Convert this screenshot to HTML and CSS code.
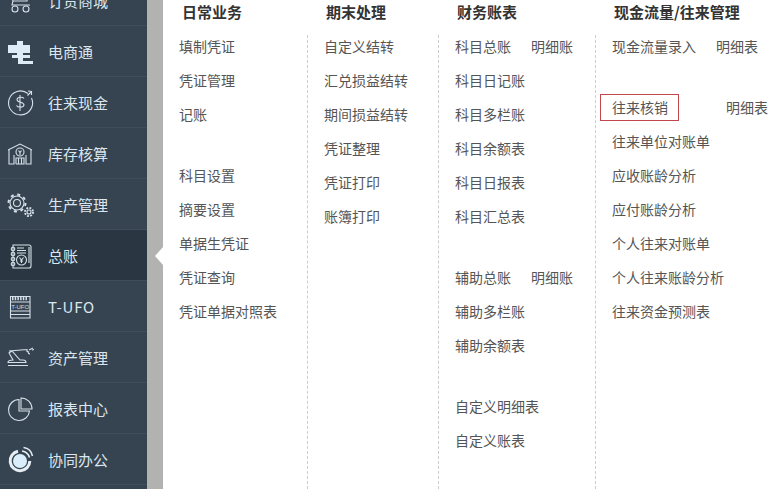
FILE: index.html
```html
<!DOCTYPE html>
<html lang="zh-CN">
<head>
  <meta charset="UTF-8" />
  <meta name="viewport" content="width=device-width, initial-scale=1.0"/>
  <title>总账</title>
  <link rel="stylesheet" href="styles.css">
</head>
<body>
  <div class="page">
    <ul class="sidebar">
      <li class="nav-item">
        <svg class="nav-icon" viewBox="0 0 40 40"><path d="M5 12h20l-2 9H9zM9 21l-1 4h18"/><circle cx="11" cy="29" r="3"/><circle cx="22" cy="29" r="3"/></svg>
        <span>订货商城</span>
      </li>
      <li class="nav-item">
        <svg class="nav-icon" viewBox="0 0 40 40"><path class="solid" d="M13 10h6v4h7v8h-7v2h7v3h-7v3h10v3H14v-6H8v-3h5v-2H4v-8h9z"/></svg>
        <span>电商通</span>
      </li>
      <li class="nav-item">
        <svg class="nav-icon" viewBox="0 0 40 40"><path d="M24 11.500A12 12 0 1 0 27.500 16"/><path d="M24 9l3.500 .5 0 3.500M27.500 9.500l-4 4"/><path d="M20 16.500c-1-1.500-6.500-2-7 1 0 3.500 7 2 7 5.500-.5 3-6.500 2.500-7.500 .5M16 13v16"/></svg>
        <span>往来现金</span>
      </li>
      <li class="nav-item">
        <svg class="nav-icon" viewBox="0 0 40 40"><path d="M4 17l12-6 12 6M5 17v14h5V22M27 17v14h-5V22"/><circle cx="16" cy="19" r="4"/><path d="M12 31v-6h8v6h-8M14.500 25v6M17.500 25v6M14.500 17.500l1.500 2 1.500-2M16 19.500V22"/></svg>
        <span>库存核算</span>
      </li>
      <li class="nav-item">
        <svg class="nav-icon" viewBox="0 0 40 40"><circle class="teeth" cx="13" cy="19" r="8.500"/><circle cx="13" cy="19" r="7"/><circle cx="13" cy="19" r="3.500"/><circle class="teeth-small" cx="25" cy="28" r="4"/><circle cx="25" cy="28" r="2"/></svg>
        <span>生产管理</span>
      </li>
      <li class="nav-item nav-item-active">
        <svg class="nav-icon" viewBox="0 0 40 40"><path d="M9 10h16a2 2 0 0 1 2 2v19a2 2 0 0 1-2 2H9zM25 12v16"/><circle cx="9" cy="14" r="1.800"/><circle cx="9" cy="19" r="1.800"/><circle cx="9" cy="24" r="1.800"/><circle cx="9" cy="29" r="1.800"/><path d="M13 13h7M13 15.500h9M13 18h9"/><circle cx="17.500" cy="25" r="5"/><path d="M15.500 22.500l2 2.500 2-2.500M17.500 25v3M16 26h3"/></svg>
        <span>总账</span>
      </li>
      <li class="nav-item">
        <svg class="nav-icon" viewBox="0 0 40 40"><path d="M6.500 10.500h19.500v21.500H6.500zM6.500 16h19.500M6.500 25h19.500M6.500 28.500h19.500"/><path class="teeth-line" d="M8 12.500h16"/><text class="tufo-label" x="16.200" y="23">T-UFO</text></svg>
        <span class="latin-label">T-UFO</span>
      </li>
      <li class="nav-item">
        <svg class="nav-icon" viewBox="0 0 40 40"><path d="M4 28.500h20M4 25.500c0-2 2-2.500 5-2.500l-4-7 3-2 8 9h3c2 0 3 1 3 2.500zM5 14l18-1.500M23 12v3M24 14c0 2 1 3 2 3M25 13l4-2M28 13l2-.5"/></svg>
        <span>资产管理</span>
      </li>
      <li class="nav-item">
        <svg class="nav-icon" viewBox="0 0 40 40"><path d="M15 11.500a10.500 10.500 0 1 0 10.500 11.500H15zM17 10v11h11a11 11 0 0 0-11-11z"/></svg>
        <span>报表中心</span>
      </li>
      <li class="nav-item">
        <svg class="nav-icon" viewBox="0 0 40 40"><circle class="sync-core" cx="16" cy="22" r="7"/><path class="sync-ring" d="M14 12.300A9.800 9.800 0 1 0 25.800 22"/><path class="sync-wave" d="M18 12c3.500.5 6.500 3 7.500 6.500M19.500 8.500c4.500 .5 8 4 9 8.500"/></svg>
        <span>协同办公</span>
      </li>
      <li class="nav-item"></li>
    </ul>
    <div class="band"></div>
    <div class="menu">
      <section>
        <h3 class="col-title">日常业务</h3>
        <ul class="col-list">
          <li class="row">填制凭证</li>
          <li class="row">凭证管理</li>
          <li class="row">记账</li>
          <li class="row row-gap">科目设置</li>
          <li class="row">摘要设置</li>
          <li class="row">单据生凭证</li>
          <li class="row">凭证查询</li>
          <li class="row">凭证单据对照表</li>
        </ul>
      </section>
      <section>
        <h3 class="col-title">期末处理</h3>
        <ul class="col-list col-line">
          <li class="row">自定义结转</li>
          <li class="row">汇兑损益结转</li>
          <li class="row">期间损益结转</li>
          <li class="row">凭证整理</li>
          <li class="row">凭证打印</li>
          <li class="row">账簿打印</li>
        </ul>
      </section>
      <section>
        <h3 class="col-title">财务账表</h3>
        <ul class="col-list col-line">
          <li class="row">科目总账<a class="detail">明细账</a></li>
          <li class="row">科目日记账</li>
          <li class="row">科目多栏账</li>
          <li class="row">科目余额表</li>
          <li class="row">科目日报表</li>
          <li class="row">科目汇总表</li>
          <li class="row row-gap">辅助总账<a class="detail">明细账</a></li>
          <li class="row">辅助多栏账</li>
          <li class="row">辅助余额表</li>
          <li class="row row-gap">自定义明细表</li>
          <li class="row">自定义账表</li>
        </ul>
      </section>
      <section>
        <h3 class="col-title">现金流量/往来管理</h3>
        <ul class="col-list col-line">
          <li class="row">现金流量录入<a class="detail">明细表</a></li>
          <li class="row row-gap"><a class="picked">往来核销</a><a class="detail detail-far">明细表</a></li>
          <li class="row">往来单位对账单</li>
          <li class="row">应收账龄分析</li>
          <li class="row">应付账龄分析</li>
          <li class="row">个人往来对账单</li>
          <li class="row">个人往来账龄分析</li>
          <li class="row">往来资金预测表</li>
        </ul>
      </section>
    </div>
  </div>
</body>
</html>
```

FILE: styles.css
```css
* { box-sizing: border-box; }
html, body { margin: 0; height: 100%; overflow: hidden; background: #fff; }
body { font-family: "Noto Sans CJK SC", "Liberation Sans", sans-serif; font-size: 14px; }
ul { list-style: none; margin: 0; padding: 0; }

.page { display: flex; height: 489px; overflow: hidden; }

/* left nav */
.sidebar { width: 147px; flex: none; margin-top: -25px; background: #364351; }
.nav-item { position: relative; display: flex; align-items: center; height: 51px; padding-left: 4px; gap: 4px; border-bottom: 1px solid #3f4c5b; color: #dbe7ef; font-size: 15px; }
.nav-item-active { background: #2a3641; }
.nav-item-active::after { content: ""; position: absolute; left: 155px; top: 17px; border: 9px solid transparent; border-left: 0; border-right: 8px solid #fff; }
.nav-icon { width: 40px; height: 40px; flex: none; fill: none; stroke: #d5e0e8; stroke-width: 1.1; }
.latin-label { letter-spacing: .8px; }
.solid { fill: #dcebf5; stroke: none; }
.teeth { stroke-width: 2; stroke-dasharray: 3 3.670; }
.teeth-small { stroke-width: 2; stroke-dasharray: 1.800 1.340; }
.teeth-line { stroke-width: 3.500; stroke-dasharray: 1.500 1.200; }
.tufo-label { fill: #d5e0e8; stroke: none; font-size: 6px; text-anchor: middle; font-family: "Liberation Sans", sans-serif; }
.sync-core { fill: #d9edfb; stroke: none; }
.sync-ring { stroke: #e6eef4; stroke-width: 3; }
.sync-wave { stroke: #e6eef4; stroke-width: 1.500; }

.band { width: 16px; flex: none; background: #b2b2b0; }

/* menu columns */
.menu { flex: 1; display: grid; grid-template-columns: 144px 131px 157px 1fr; color: #555; }
.col-title { margin: 0; height: 35px; padding: 1px 0 0 19px; line-height: 22px; font-size: 15px; font-weight: 700; color: #333; }
.col-list { height: 454px; padding-left: 16px; }
.col-line { border-left: 1px dashed #ccc; }
.row { display: flex; align-items: center; height: 24px; margin-bottom: 10px; padding-bottom: 2px; white-space: nowrap; }
.row-gap { margin-top: 37px; }
.detail { margin-left: 20px; }
.detail-far { margin-left: 47px; }
.picked { flex: none; height: 27px; margin-left: -12px; padding: 0 10px 0 11px; line-height: 25px; border: 1px solid #c0484c; }
```
